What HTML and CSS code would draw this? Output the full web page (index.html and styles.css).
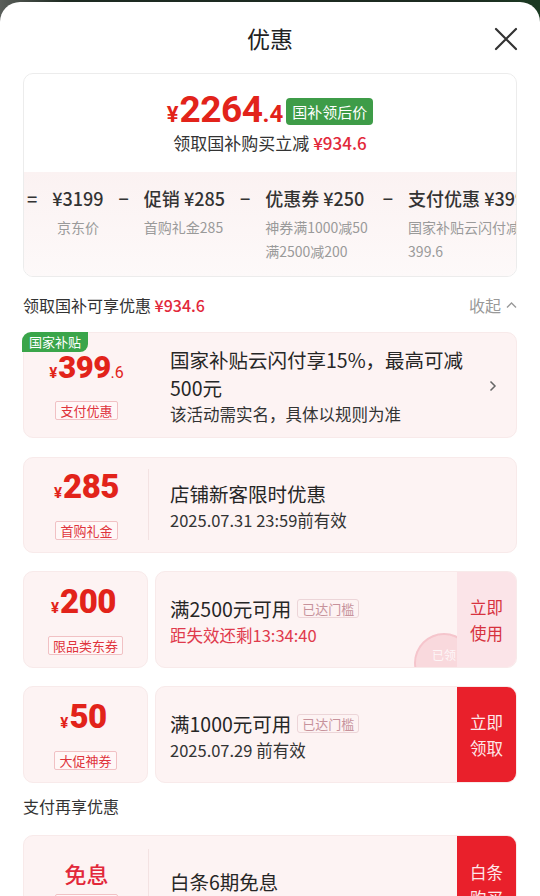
FILE: index.html
```html
<!DOCTYPE html>
<html lang="zh-CN">
<head>
  <meta charset="UTF-8" />
  <meta name="viewport" content="width=device-width, initial-scale=1.0" />
  <title>优惠</title>
  <link rel="stylesheet" href="styles.css">
</head>
<body>
  <div class="sheet">
    <header class="head">
      <span></span>
      <h1>优惠</h1>
      <button class="close" aria-label="关闭">
        <svg width="24" height="24" viewBox="0 0 24 24"><path d="M2 2 L22 22 M22 2 L2 22" stroke="#333" stroke-width="2.2" stroke-linecap="round" fill="none"/></svg>
      </button>
    </header>

    <section class="summary">
      <div class="sum-top">
        <div class="final">
          <span class="price"><span class="p-yen">¥</span><span class="p-int">2264</span><span class="p-dec">.4</span></span>
          <span class="badge-green">国补领后价</span>
        </div>
        <div class="save">领取国补购买立减 <b>¥934.6</b></div>
      </div>
      <div class="formula">
        <div class="f-op">=</div>
        <div class="f-item first">
          <div class="f-val">¥3199</div>
          <div class="f-note">京东价</div>
        </div>
        <div class="f-op">−</div>
        <div class="f-item">
          <div class="f-val">促销 ¥285</div>
          <div class="f-note">首购礼金285</div>
        </div>
        <div class="f-op">−</div>
        <div class="f-item">
          <div class="f-val">优惠券 ¥250</div>
          <div class="f-note">神券满1000减50<br>满2500减200</div>
        </div>
        <div class="f-op">−</div>
        <div class="f-item">
          <div class="f-val">支付优惠 ¥399.6</div>
          <div class="f-note">国家补贴云闪付减<br>399.6</div>
        </div>
      </div>
    </section>

    <div class="sec">
      <span>领取国补可享优惠 <b class="red">¥934.6</b></span>
      <span class="fold">收起
        <svg width="11" height="8" viewBox="0 0 11 8"><path d="M1 6.5 L5.5 2 L10 6.5" stroke="#999" stroke-width="1.4" fill="none"/></svg>
      </span>
    </div>

    <div class="card card-gov">
      <span class="tag-gov">国家补贴</span>
      <div class="card-left">
        <div class="price small"><span class="p-yen">¥</span><span class="p-int">399</span><span class="p-dec">.6</span></div>
        <span class="tag-red">支付优惠</span>
      </div>
      <div class="card-body">
        <div class="c-title">国家补贴云闪付享15%，最高可减<br>500元</div>
        <div class="c-sub">该活动需实名，具体以规则为准</div>
      </div>
      <div class="card-arrow">
        <svg width="8" height="12" viewBox="0 0 8 12"><path d="M1.5 1.5 L6 6 L1.5 10.5" stroke="#666" stroke-width="1.5" fill="none"/></svg>
      </div>
    </div>

    <div class="card card-shop">
      <div class="card-left split">
        <div class="price"><span class="p-yen">¥</span><span class="p-int">285</span></div>
        <span class="tag-red">首购礼金</span>
      </div>
      <div class="card-body mid">
        <div class="c-title">店铺新客限时优惠</div>
        <div class="c-sub">2025.07.31 23:59前有效</div>
      </div>
    </div>

    <div class="coupon">
      <div class="c-left">
        <div class="price"><span class="p-yen">¥</span><span class="p-int">200</span></div>
        <span class="tag-red">限品类东券</span>
      </div>
      <div class="c-main">
        <div class="card-body">
          <div class="c-title">满2500元可用<span class="tag-grey">已达门槛</span></div>
          <div class="c-sub red-sub">距失效还剩13:34:40</div>
        </div>
        <span class="stamp">已领</span>
        <div class="c-act light">立即<br>使用</div>
      </div>
    </div>

    <div class="coupon last">
      <div class="c-left">
        <div class="price"><span class="p-yen">¥</span><span class="p-int">50</span></div>
        <span class="tag-red">大促神券</span>
      </div>
      <div class="c-main">
        <div class="card-body">
          <div class="c-title">满1000元可用<span class="tag-grey">已达门槛</span></div>
          <div class="c-sub">2025.07.29 前有效</div>
        </div>
        <div class="c-act solid">立即<br>领取</div>
      </div>
    </div>

    <div class="sec sec-pay">
      <span>支付再享优惠</span>
    </div>

    <div class="card card-pay">
      <div class="card-left split">
        <div class="free">免息</div>
        <span class="tag-red">白条优惠</span>
      </div>
      <div class="card-body">
        <div class="c-title">白条6期免息</div>
      </div>
      <div class="c-act solid">白条<br>购买</div>
    </div>
  </div>
</body>
</html>
```

FILE: styles.css
```css
* {
  box-sizing: border-box;
  margin: 0;
  padding: 0;
}
html, body {
  height: 100%;
  overflow: hidden;
}
body {
  background: linear-gradient(to right, #5a5e5a, #1d2a21 12%, #1c2a20 85%, #1b3a22);
  font-family: "Noto Sans CJK SC", "Noto Sans", sans-serif;
  color: #262626;
}
.sheet {
  margin-top: 2px;
  height: 894px;
  background: #fff;
  border-radius: 20px 20px 0 0;
  padding: 0 23px;
  overflow: hidden;
}
.head {
  height: 71px;
  display: grid;
  grid-template-columns: 1fr auto 1fr;
  align-items: center;
}
.head h1 {
  font-size: 23px;
  font-weight: 400;
  color: #222;
  line-height: 30px;
}
.close {
  justify-self: end;
  background: none;
  border: none;
  width: 24px;
  height: 24px;
  margin-right: -1px;
  margin-top: 2px;
}
.red {
  color: #e2283a;
  font-weight: 500;
}

/* top summary */
.summary {
  border: 1px solid #ececec;
  border-radius: 10px;
  overflow: hidden;
}
.sum-top {
  height: 98px;
  display: flex;
  flex-direction: column;
  align-items: center;
  padding-top: 21px;
}
.final {
  display: flex;
  align-items: center;
  height: 36px;
}
.price {
  font-family: Roboto, "Noto Sans", sans-serif;
  font-weight: 700;
  color: #e2231a;
  line-height: 36px;
  white-space: nowrap;
}
.price .p-yen {
  font-size: 22px;
  margin-right: 1px;
}
.price .p-int {
  font-size: 37px;
  letter-spacing: -0.5px;
}
.price .p-dec {
  font-size: 24px;
}
.badge-green {
  margin-left: 3px;
  margin-top: -3px;
  height: 27px;
  line-height: 27px;
  padding: 0 6px;
  font-size: 15px;
  color: #fff;
  background: #3e9c48;
  border-radius: 4px;
}
.save {
  font-size: 17px;
  line-height: 24px;
  color: #333;
}
.save b {
  color: #e2283a;
  font-weight: 500;
}
.formula {
  display: flex;
  gap: 15px;
  padding: 13px 0 13px 3px;
  background: linear-gradient(#fbf2f2, #fdf9f9);
  white-space: nowrap;
  overflow: hidden;
}
.f-op, .f-val {
  font-size: 18px;
  line-height: 26px;
  font-weight: 500;
  color: #333;
}
.f-item {
  display: flex;
  flex-direction: column;
  flex-shrink: 0;
}
.f-item.first {
  align-items: center;
}
.f-note {
  margin-top: 4px;
  font-size: 14px;
  line-height: 24px;
  color: #9a9a9a;
}

/* section label */
.sec {
  display: flex;
  justify-content: space-between;
  align-items: center;
  margin: 16px 0 15px;
  font-size: 16px;
  line-height: 24px;
  color: #333;
}
.fold {
  color: #999;
  display: flex;
  align-items: center;
  gap: 5px;
}
.sec-pay {
  margin: 11px 0 17px;
}

/* cards */
.card {
  position: relative;
  display: flex;
  background: #fdf3f3;
  border: 1px solid #f8eaea;
  border-radius: 10px;
  overflow: hidden;
}
.card-gov {
  overflow: visible;
  margin-bottom: 19px;
}
.card-shop {
  margin-bottom: 18px;
}
.tag-gov {
  position: absolute;
  left: -2px;
  top: -1px;
  height: 20px;
  line-height: 20px;
  padding: 0 7px;
  font-size: 13px;
  color: #fff;
  background: #3aa54a;
  border-radius: 9px 0 8px 0;
}
.card-left, .c-left {
  width: 125px;
  flex-shrink: 0;
  display: flex;
  flex-direction: column;
  align-items: center;
  justify-content: center;
}
.card-left.split {
  background-image: linear-gradient(#f3e2e2, #f3e2e2);
  background-size: 1px 76%;
  background-position: right center;
  background-repeat: no-repeat;
}
.card-left .price, .c-left .price {
  line-height: 34px;
  font-weight: 900;
}
.card-left .price .p-yen, .c-left .price .p-yen {
  font-size: 15px;
  font-weight: 700;
}
.card-left .price .p-int, .c-left .price .p-int {
  font-size: 33px;
}
.price.small .p-int {
  font-size: 31px;
}
.price.small .p-dec {
  font-size: 16px;
  font-weight: 400;
}
.tag-red {
  margin-top: 11px;
  height: 19px;
  line-height: 17px;
  padding: 0 4px;
  font-size: 13px;
  color: #e0343c;
  border: 1px solid #f1c1c4;
  border-radius: 2px;
  background: #fff7f7;
  white-space: nowrap;
}
.card-body {
  flex: 1;
  padding: 13px 0 10px 21px;
}
.card-body.mid {
  padding: 22px 0 19px 21px;
}
.c-title {
  font-size: 19.5px;
  line-height: 28px;
  color: #262626;
  white-space: nowrap;
}
.c-sub {
  font-size: 16.5px;
  line-height: 25px;
  color: #333;
}
.red-sub {
  color: #e03a4c;
}
.card-arrow {
  width: 46px;
  display: flex;
  align-items: center;
  justify-content: center;
  padding-top: 2px;
}
.tag-grey {
  display: inline-block;
  vertical-align: 3px;
  margin-left: 6px;
  height: 19px;
  line-height: 17px;
  padding: 0 4px;
  font-size: 13px;
  color: #c7929b;
  border: 1px solid #ecd5d8;
  border-radius: 3px;
}

/* ticket style coupons */
.coupon {
  display: flex;
  gap: 7px;
  height: 97px;
  margin-bottom: 18px;
}
.coupon.last {
  margin-bottom: 0;
}
.c-left {
  background: #fdf3f3;
  border: 1px solid #f8eaea;
  border-radius: 10px;
}
.c-left .price {
  margin-right: 4px;
}
.c-main {
  flex: 1;
  position: relative;
  display: flex;
  background: #fdf3f3;
  border: 1px solid #f8eaea;
  border-radius: 10px;
  overflow: hidden;
}
.c-main .card-body {
  padding: 23px 0 19px 14px;
}
.c-act {
  position: relative;
  width: 59px;
  flex-shrink: 0;
  display: flex;
  align-items: center;
  justify-content: center;
  text-align: center;
  font-size: 16.5px;
  line-height: 26px;
}
.c-act.light {
  background: #fbe4e8;
  color: #d7323e;
}
.c-act.solid {
  background: #e9202b;
  color: #fde8ea;
}
.stamp {
  position: absolute;
  left: 258px;
  top: 61px;
  width: 60px;
  height: 60px;
  border-radius: 50%;
  background: rgba(242, 170, 180, 0.35);
  border: 2px solid rgba(240, 160, 172, 0.35);
  color: rgba(255, 255, 255, 0.8);
  font-size: 12px;
  text-align: center;
  line-height: 40px;
}

/* pay card, cut by the screen edge */
.card-pay {
  height: 110px;
  align-items: flex-start;
}
.card-pay .card-left {
  height: 100%;
  justify-content: flex-start;
  padding-top: 22px;
}
.card-pay .card-left .tag-red {
  margin-top: 6px;
}
.card-pay .card-body {
  padding: 32px 0 0 21px;
}
.card-pay .c-act {
  height: 100%;
  align-items: flex-start;
  padding-top: 23px;
}
.free {
  font-size: 22px;
  line-height: 30px;
  color: #e2283a;
  font-weight: 500;
}
```
